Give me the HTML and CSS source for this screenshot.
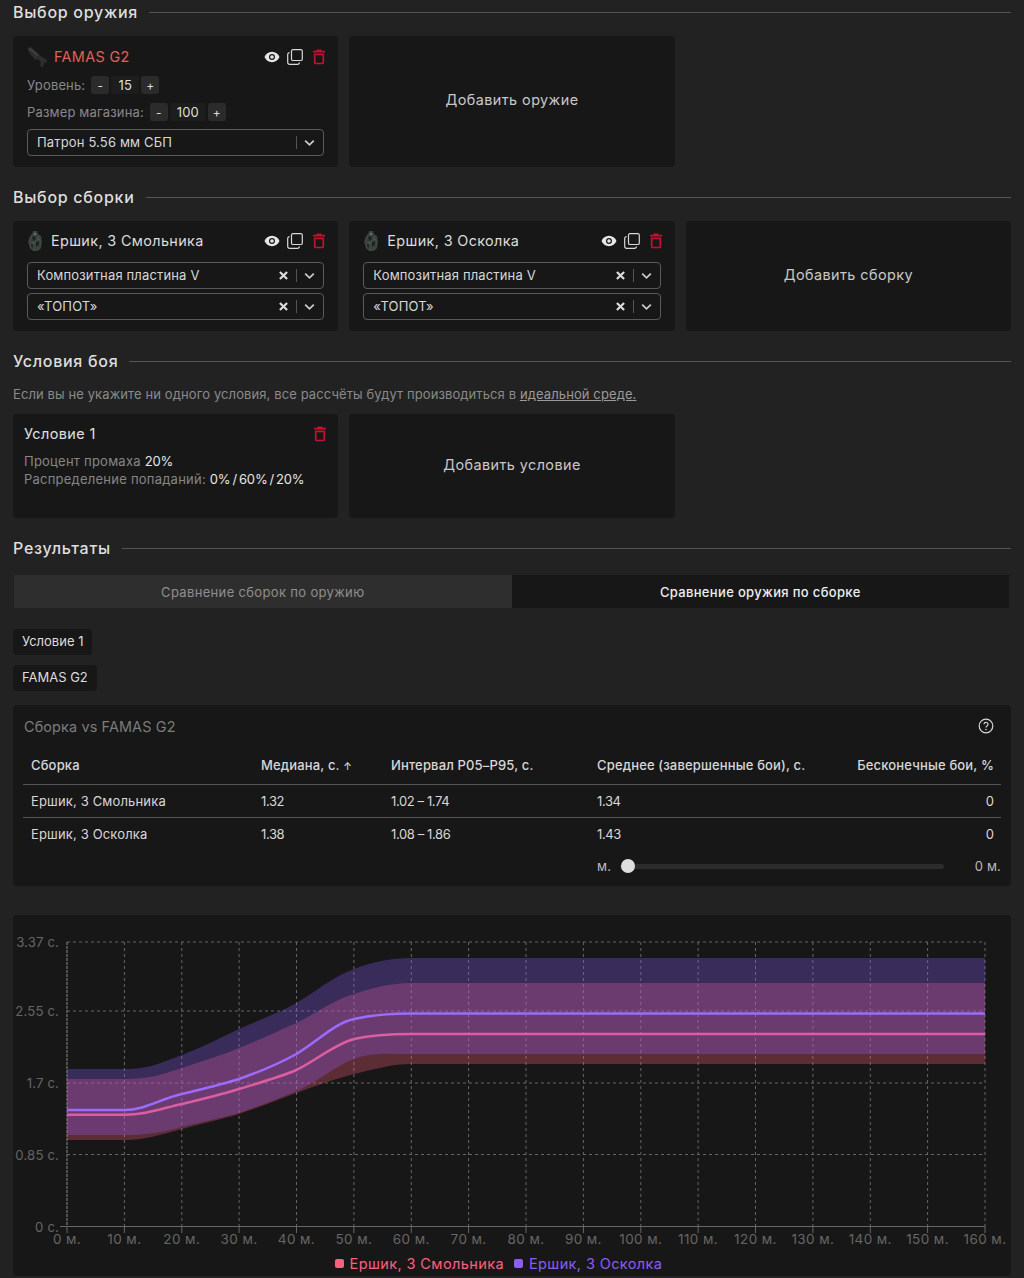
FILE: index.html
```html
<!DOCTYPE html>
<html lang="ru">
<head>
<meta charset="utf-8">
<title>Сравнение</title>
<link rel="stylesheet" href="styles.css">
</head>
<body>
<svg class="defs" width="0" height="0">
  <defs>
    <symbol id="eye" viewBox="0 0 16 16"><path fill="#e6e6e6" fill-rule="evenodd" d="M8 2.800C4.600 2.800 1.700 4.900.5 8c1.200 3.100 4.100 5.200 7.500 5.200s6.300-2.100 7.500-5.200C14.300 4.900 11.400 2.800 8 2.800zM8 11a3 3 0 1 1 0-6 3 3 0 0 1 0 6zM8 6.200a1.800 1.800 0 1 0 0 3.600 1.800 1.800 0 0 0 0-3.600z"/></symbol>
    <symbol id="copy" viewBox="0 0 16 16"><rect x="4.500" y=".7" width="10.800" height="10.800" rx="1.600" fill="none" stroke="#d8d8d8" stroke-width="1.200"/><path fill="none" stroke="#d8d8d8" stroke-width="1.200" d="M2.600 3.600A1.800 1.800 0 0 0 .7 5.400v8.100a1.800 1.800 0 0 0 1.800 1.800h8.100a1.800 1.800 0 0 0 1.800-1.900"/></symbol>
    <symbol id="trash" viewBox="0 0 14 16"><path fill="#c8102e" d="M4.800 .6h4.400l.7 1.100H13v1.700H1V1.700h3.100z"/><path fill="none" stroke="#c8102e" stroke-width="1.700" d="M2.700 5.300h8.600v8.200a1 1 0 0 1-1 1H3.700a1 1 0 0 1-1-1z"/></symbol>
    <symbol id="chev" viewBox="0 0 12 8"><path fill="none" stroke="#c9c9c9" stroke-width="2" d="M1.300 1.500 6 6l4.700-4.500"/></symbol>
    <symbol id="cross" viewBox="0 0 10 10"><path fill="none" stroke="#dcdcdc" stroke-width="2.400" d="M1 1l8 8M9 1 1 9"/></symbol>
    <symbol id="armor" viewBox="0 0 16 22"><path fill="#3b443f" d="M6 1h4l1 3 3 2 1 6-1 6-3 3H6l-3-3-2-6 2-6 2-2z"/><path fill="#1f2421" d="M5 7l3-1 1 3-3 2zM9 12l3-1v4l-3 2zM4 14l2 1v3l-2-2z"/><path fill="#6a736d" d="M7 3h2v2H7zM11 8l1 1-1 1zM6 12h1v1H6z"/></symbol>
    <symbol id="gun" viewBox="0 0 22 22"><path fill="#2e2e2e" d="M1 2l3-1 12 11 3 1 1 3-3 1-1 4-3-1 1-4-3-3-3 1-1-2-3-3-3-4z"/><path fill="#454545" d="M3 2l8 7-1 1-8-7z"/></symbol>
  </defs>
</svg>

<main class="page">
  <header class="section-head"><h2>Выбор оружия</h2><span class="rule"></span></header>
  <div class="grid">
    <article class="card weapon">
      <div class="card-head">
        <svg class="thumb"><use href="#gun"/></svg>
        <span class="name red">FAMAS G2</span>
        <div class="actions">
          <svg class="ic-eye"><use href="#eye"/></svg>
          <svg class="ic-copy"><use href="#copy"/></svg>
          <svg class="ic-trash"><use href="#trash"/></svg>
        </div>
      </div>
      <div class="stepper-row"><span class="muted">Уровень:</span><span class="step">-</span><span class="value v1">15</span><span class="step">+</span></div>
      <div class="stepper-row"><span class="muted">Размер магазина:</span><span class="step">-</span><span class="value v2">100</span><span class="step">+</span></div>
      <div class="select"><span class="sel-text">Патрон 5.56 мм СБП</span><i class="sep"></i><svg class="ic-chev"><use href="#chev"/></svg></div>
    </article>
    <button class="card add">Добавить оружие</button>
  </div>

  <header class="section-head"><h2>Выбор сборки</h2><span class="rule"></span></header>
  <div class="grid">
    <article class="card build">
      <div class="card-head">
        <svg class="thumb small"><use href="#armor"/></svg>
        <span class="name">Ершик, 3 Смольника</span>
        <div class="actions">
          <svg class="ic-eye"><use href="#eye"/></svg>
          <svg class="ic-copy"><use href="#copy"/></svg>
          <svg class="ic-trash"><use href="#trash"/></svg>
        </div>
      </div>
      <div class="select"><span class="sel-text">Композитная пластина V</span><svg class="ic-cross"><use href="#cross"/></svg><i class="sep"></i><svg class="ic-chev"><use href="#chev"/></svg></div>
      <div class="select"><span class="sel-text">«ТОПОТ»</span><svg class="ic-cross"><use href="#cross"/></svg><i class="sep"></i><svg class="ic-chev"><use href="#chev"/></svg></div>
    </article>
    <article class="card build">
      <div class="card-head">
        <svg class="thumb small"><use href="#armor"/></svg>
        <span class="name">Ершик, 3 Осколка</span>
        <div class="actions">
          <svg class="ic-eye"><use href="#eye"/></svg>
          <svg class="ic-copy"><use href="#copy"/></svg>
          <svg class="ic-trash"><use href="#trash"/></svg>
        </div>
      </div>
      <div class="select"><span class="sel-text">Композитная пластина V</span><svg class="ic-cross"><use href="#cross"/></svg><i class="sep"></i><svg class="ic-chev"><use href="#chev"/></svg></div>
      <div class="select"><span class="sel-text">«ТОПОТ»</span><svg class="ic-cross"><use href="#cross"/></svg><i class="sep"></i><svg class="ic-chev"><use href="#chev"/></svg></div>
    </article>
    <button class="card add">Добавить сборку</button>
  </div>

  <header class="section-head"><h2>Условия боя</h2><span class="rule"></span></header>
  <p class="hint">Если вы не укажите ни одного условия, все рассчёты будут производиться в <a href="#">идеальной среде.</a></p>
  <div class="grid">
    <article class="card condition">
      <div class="cond-head"><span class="cond-title">Условие 1</span><svg class="ic-trash"><use href="#trash"/></svg></div>
      <p class="cond-line">Процент промаха <b>20%</b></p>
      <p class="cond-line">Распределение попаданий: <b>0% / 60% / 20%</b></p>
    </article>
    <button class="card add">Добавить условие</button>
  </div>

  <header class="section-head"><h2>Результаты</h2><span class="rule"></span></header>
  <div class="tabs">
    <span class="tab">Сравнение сборок по оружию</span>
    <span class="tab on">Сравнение оружия по сборке</span>
  </div>
  <div class="tags"><span class="tag">Условие 1</span><span class="tag">FAMAS G2</span></div>

  <section class="card table-card">
    <div class="tc-head">
      <span class="tc-title">Сборка vs FAMAS G2</span>
      <svg class="ic-help" viewBox="0 0 16 16"><circle cx="8" cy="8" r="6.800" fill="none" stroke="#d8d8d8" stroke-width="1.200"/><path fill="none" stroke="#d8d8d8" stroke-width="1.200" d="M6 6.300a2 2 0 1 1 3 1.700c-.7.400-1 .8-1 1.500"/><circle cx="8" cy="11.500" r=".8" fill="#d8d8d8"/></svg>
    </div>
    <table>
      <thead>
        <tr><th class="c1">Сборка</th><th class="c2">Медиана, с. <span class="arrow">↑</span></th><th class="c3">Интервал P05–P95, с.</th><th class="c4">Среднее (завершенные бои), с.</th><th class="c5">Бесконечные бои, %</th></tr>
      </thead>
      <tbody>
        <tr><td>Ершик, 3 Смольника</td><td class="num">1.32</td><td class="num">1.02 – 1.74</td><td class="num">1.34</td><td class="c5">0</td></tr>
        <tr><td>Ершик, 3 Осколка</td><td class="num">1.38</td><td class="num">1.08 – 1.86</td><td class="num">1.43</td><td class="c5">0</td></tr>
      </tbody>
    </table>
    <div class="slider"><span>м.</span><div class="track"><i class="knob"></i></div><span class="slider-val">0 м.</span></div>
  </section>

  <section class="card chart-card">
    <svg class="chart" viewBox="13 915 998 331">
      <g class="grid-lines">
        <path d="M67 942H985M67 1011H985M67 1083H985M67 1154.500H985"/>
        <path d="M124.400 942V1226M181.800 942V1226M239.100 942V1226M296.500 942V1226M353.900 942V1226M411.300 942V1226M468.600 942V1226M526 942V1226M583.400 942V1226M640.800 942V1226M698.100 942V1226M755.500 942V1226M812.900 942V1226M870.300 942V1226M927.600 942V1226M985 942V1226"/>
      </g>
      <path class="axis-y" d="M67 942V1226"/>
      <path class="axis-x" d="M60 1226.500H985M67 1226V1233M124.400 1226V1233M181.800 1226V1233M239.100 1226V1233M296.500 1226V1233M353.900 1226V1233M411.300 1226V1233M468.600 1226V1233M526 1226V1233M583.400 1226V1233M640.800 1226V1233M698.100 1226V1233M755.500 1226V1233M812.900 1226V1233M870.300 1226V1233M927.600 1226V1233M985 1226V1233"/>

      <path class="band-pink" d="M67 1079H124C150 1079 160 1075 181.800 1068C205 1060 220 1056 239 1048C262 1039 280 1030 296.500 1023C318 1012 334 1000 354 994C372 988 390 983 411 983H985V1064H411C392 1064 375 1069 354 1074C335 1079 318 1085 296.500 1093C280 1099 260 1107 239 1114C222 1119 200 1124 181.800 1129C160 1135 145 1140 124 1140H67Z"/>
      <path class="line-pink" d="M67 1114.700H124C145 1114.700 160 1109 181.800 1104C202 1099 220 1095 239 1089C262 1082 280 1077 296.500 1070C315 1061 335 1044 354 1039C372 1035 390 1034 411 1034H985"/>
      <path class="band-purple" d="M67 1069H124C150 1069 160 1063 181.800 1055C205 1046 220 1038 239 1029C262 1019 280 1012 296.500 1003C318 990 334 976 354 969C372 962 390 958 411 958H985V1054H411C390 1054 372 1052 354 1059C335 1066 318 1082 296.500 1091C280 1098 260 1106 239 1113C222 1118 200 1122 181.800 1127C160 1133 145 1135 124 1135H67Z"/>
      <path class="line-purple" d="M67 1110H124C145 1110 160 1099 181.800 1094C202 1089 220 1085 239 1079C262 1071 280 1063 296.500 1054C318 1041 335 1023 354 1019C372 1015 390 1013.500 411 1013.500H985"/>

      <g class="ylabels">
        <text x="59" y="947">3.37 с.</text>
        <text x="59" y="1016">2.55 с.</text>
        <text x="59" y="1088">1.7 с.</text>
        <text x="59" y="1160">0.85 с.</text>
        <text x="59" y="1232">0 с.</text>
      </g>
      <g class="xlabels">
        <text x="67" y="1244">0 м.</text><text x="124.400" y="1244">10 м.</text><text x="181.800" y="1244">20 м.</text><text x="239.100" y="1244">30 м.</text><text x="296.500" y="1244">40 м.</text><text x="353.900" y="1244">50 м.</text><text x="411.300" y="1244">60 м.</text><text x="468.600" y="1244">70 м.</text><text x="526" y="1244">80 м.</text><text x="583.400" y="1244">90 м.</text><text x="640.800" y="1244">100 м.</text><text x="698.100" y="1244">110 м.</text><text x="755.500" y="1244">120 м.</text><text x="812.900" y="1244">130 м.</text><text x="870.300" y="1244">140 м.</text><text x="927.600" y="1244">150 м.</text><text x="985" y="1244">160 м.</text>
      </g>
    </svg>
    <div class="legend">
      <span class="lg pink"><i></i>Ершик, 3 Смольника</span>
      <span class="lg violet"><i></i>Ершик, 3 Осколка</span>
    </div>
  </section>
</main>
</body>
</html>
```

FILE: styles.css
```css
* { box-sizing: border-box; }
html, body { margin: 0; padding: 0; }
body {
  background: #222222;
  color: #e4e4e4;
  font-family: Inter, "Liberation Sans", sans-serif;
  font-size: 13px;
  letter-spacing: .012em;
}
.defs { position: absolute; }
.page { padding: 0 13px; height: 1278px; overflow: hidden; }

.section-head { display: flex; align-items: center; gap: 11px; height: 24px; margin-bottom: 12px; }
.section-head h2 { margin: 0; font-size: 16px; font-weight: 500; color: #dedede; white-space: nowrap; letter-spacing: .045em; }
.rule { flex: 1; height: 1px; background: #555; }

.grid { display: grid; grid-template-columns: repeat(3, 1fr); gap: 11px; margin-bottom: 18px; }
.card { background: #171717; border: 0; border-radius: 4px; }
.add {
  color: #c8c8c8;
  font: inherit;
  font-size: 14.400px;
  letter-spacing: .03em;
  display: flex; align-items: center; justify-content: center;
  padding: 0 0 4px;
}

.weapon { padding: 9px 14px 11px; height: 131px; }
.build { padding: 8px 14px 11px; height: 110px; }
.condition { padding: 9px 11px; height: 104px; }

.card-head { display: flex; align-items: center; height: 24px; }
.thumb { width: 22px; height: 22px; margin-right: 5px; flex: none; }
.thumb.small { width: 16px; height: 22px; margin-right: 8px; }
.name { font-size: 14.400px; color: #dcdcdc; letter-spacing: .025em; margin-top: -1px; }
.name.red { color: #e0605a; }
.actions { margin-left: auto; margin-right: -2px; display: flex; align-items: center; gap: 7px; }
.ic-eye { width: 16px; height: 16px; }
.ic-copy { width: 16px; height: 16px; }
.ic-trash { width: 14px; height: 16px; margin-left: 2px; }

.stepper-row { display: flex; align-items: center; gap: 2px; height: 18px; margin-top: 7px; }
.stepper-row + .stepper-row { margin-top: 9px; }
.muted { color: #888; margin-right: 4px; }
.step { width: 18px; height: 18px; background: #2b2b2b; color: #ddd; border-radius: 3px; display: flex; align-items: center; justify-content: center; font-size: 12px; }
.value { height: 18px; background: #1d1d1d; color: #ddd; display: flex; align-items: center; justify-content: center; }
.v1 { width: 28px; }
.v2 { width: 36px; }

.select {
  display: flex; align-items: center;
  height: 27px;
  margin-top: 4px;
  padding: 0 8px 0 9px;
  border: 1px solid #5a5a5a;
  border-radius: 4px;
}
.weapon .select { margin-top: 8px; }
.build .card-head + .select { margin-top: 9px; }
.sel-text { flex: 1; color: #d8d8d8; white-space: nowrap; margin-top: -2px; }
.ic-cross { width: 9px; height: 9px; margin-right: 8px; }
.sep { width: 1px; height: 13px; background: #555; margin-right: 7px; }
.ic-chev { width: 11px; height: 8px; }

.hint { margin: -1px 0 10px; height: 20px; line-height: 20px; color: #8a8a8a; white-space: nowrap; letter-spacing: .008em; }
.hint a { color: #9a9a9a; }

.cond-head { display: flex; justify-content: space-between; align-items: center; height: 22px; margin-bottom: 7px; }
.cond-title { font-size: 14.400px; color: #e0e0e0; letter-spacing: .03em; margin-top: -1px; }
.cond-line { margin: 0; height: 18px; line-height: 18px; color: #868686; white-space: nowrap; letter-spacing: .018em; }
.cond-line b { font-weight: 400; color: #e6e6e6; letter-spacing: -.012em; word-spacing: -1.500px; }

.tabs { display: flex; height: 33px; margin: 15px 2px 21px 1px; letter-spacing: .026em; }
.tab { flex: 1; display: flex; align-items: center; justify-content: center; background: #2e2e2e; color: #8f8f8f; }
.tab.on { background: #171717; color: #eee; font-weight: 500; }

.tags { display: flex; flex-direction: column; align-items: flex-start; gap: 10px; }
.tag { height: 26px; line-height: 25px; padding: 0 9px; background: #171717; border-radius: 4px; color: #ddd; letter-spacing: 0; }

.table-card { margin-top: 14px; height: 181px; padding: 10px 10px 0; }
.tc-head { display: flex; justify-content: space-between; align-items: center; height: 22px; padding: 0 1px; }
.tc-title { font-size: 14.400px; color: #7c7c7c; letter-spacing: .01em; }
.ic-help { width: 16px; height: 16px; margin-right: 6px; }
table { width: 100%; border-collapse: collapse; table-layout: fixed; margin-top: 9px; }
th { height: 38px; text-align: left; font-weight: 500; color: #d8d8d8; padding: 0 8px; border-bottom: 1px solid #555; white-space: nowrap; }
td { height: 33px; padding: 0 8px; color: #d8d8d8; white-space: nowrap; }
td.num { letter-spacing: -.03em; }
tbody tr:first-child td { border-bottom: 1px solid #555; }
.c1 { width: 230px; }
.c2 { width: 130px; }
.c3 { width: 206px; }
.c4 { width: 220px; }
th.c5, td.c5 { text-align: right; padding-right: 7px; }
.arrow { font-size: 10px; }

.slider { display: flex; align-items: center; width: 404px; height: 16px; margin: 8px 0 0 auto; color: #bbb; }
.track { position: relative; width: 324px; height: 5px; margin-left: 9px; background: #2c2c2c; border-radius: 3px; }
.knob { position: absolute; left: 1px; top: -5px; width: 14px; height: 14px; border-radius: 50%; background: #dedede; }
.slider-val { margin-left: auto; }

.chart-card { margin-top: 29px; height: 361px; }
.chart { display: block; width: 998px; height: 331px; }
.grid-lines path { fill: none; stroke: #666; stroke-width: 1; stroke-dasharray: 3 3; }
.axis-y { fill: none; stroke: #666; stroke-width: 1.500; stroke-dasharray: 3 1; }
.axis-x { fill: none; stroke: #666; stroke-width: 1; }
.band-pink { fill: rgba(255, 95, 126, .3); }
.band-purple { fill: rgba(139, 92, 246, .3); }
.line-pink { fill: none; stroke: #ff5f7e; stroke-width: 2.500; }
.line-purple { fill: none; stroke: #9b6cff; stroke-width: 2.500; }
.ylabels text { fill: #666; font-size: 13.200px; letter-spacing: .01em; text-anchor: end; }
.xlabels text { fill: #666; font-size: 13.500px; letter-spacing: .03em; text-anchor: middle; }

.legend { display: flex; justify-content: center; gap: 10px; height: 30px; padding: 8px 27px 0 0; font-size: 14.500px; letter-spacing: .027em; }
.lg { display: flex; align-items: center; height: 18px; }
.lg i { width: 9px; height: 9px; border-radius: 2px; margin-right: 6px; }
.pink { color: #ff5f7e; }
.pink i { background: #ff5f7e; }
.violet { color: #8b5cf6; }
.violet i { background: #8b5cf6; }
```
